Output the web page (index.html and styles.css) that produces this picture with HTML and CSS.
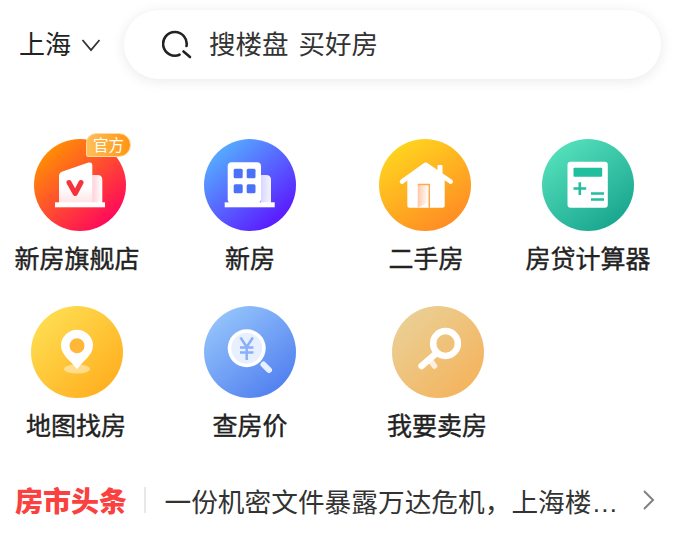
FILE: index.html
```html
<!DOCTYPE html>
<html lang="zh-CN">
<head>
    <meta charset="UTF-8">
    <meta name="viewport" content="width=device-width, initial-scale=1.0">
    <title>房产</title>
    <link rel="stylesheet" href="styles.css">
</head>
<body>

    <!-- 顶部：城市 + 搜索 -->
    <div class="topbar">
        <div class="city">
            <span class="city-name">上海</span>
            <svg class="city-arrow" width="20" height="14" viewBox="0 0 20 14"><path d="M1.500 2l8.500 10 8.500-10" fill="none" stroke="#333" stroke-width="1.800"/></svg>
        </div>
        <div class="search">
            <svg class="search-icon" width="30" height="30" viewBox="0 0 30 30"><path d="M24.500 16A11.800 11.800 0 1 0 17.500 24.700" fill="none" stroke="#222" stroke-width="2.600" stroke-linecap="round"/><path d="M21.500 21.500l6.500 5.500" fill="none" stroke="#222" stroke-width="2.600" stroke-linecap="round"/></svg>
            <span class="search-text">搜楼盘 买好房</span>
        </div>
    </div>

    <!-- 入口 第一排 -->
    <div class="row row-one">
        <a class="tile w160">
            <div class="tile-icon">
                <svg width="92" height="92" viewBox="0 0 92 92">
                    <defs>
                        <linearGradient id="g1" x1="0.1" y1="0.1" x2="0.8" y2="0.9"><stop offset="0" stop-color="#ff9500"/><stop offset="1" stop-color="#ff0a5a"/></linearGradient>
                        <linearGradient id="g1w" x1="0" y1="0" x2="1" y2="0"><stop offset="0" stop-color="#ffd0d6"/><stop offset="1" stop-color="#fff"/></linearGradient>
                        <linearGradient id="g1b" x1="0" y1="0" x2="0" y2="1"><stop offset="0.6" stop-color="#fff"/><stop offset="1" stop-color="#ffe4e6"/></linearGradient>
                    </defs>
                    <circle cx="46" cy="46" r="46" fill="url(#g1)"/>
                    <path d="M58 36h5.500q4.800 0 4.800 5v23H58z" fill="url(#g1w)"/>
                    <path d="M25 37q0-3.500 3.500-4.600l26-8.800q3.800-1 3.800 3V64H25z" fill="url(#g1b)"/>
                    <rect x="21" y="63.300" width="50" height="5" fill="#fff"/>
                    <path d="M35 43.500l6.200 11 5.800-11" fill="none" stroke="#f6323c" stroke-width="5" stroke-linecap="round" stroke-linejoin="round"/>
                </svg>
                <span class="badge">官方</span>
            </div>
            <span class="tile-name shift-l3">新房旗舰店</span>
        </a>
        <a class="tile w180">
            <div class="tile-icon">
                <svg width="92" height="92" viewBox="0 0 92 92">
                    <defs>
                        <linearGradient id="g2" x1="0.15" y1="0.1" x2="0.8" y2="0.85"><stop offset="0" stop-color="#55aeff"/><stop offset="1" stop-color="#5a20ff"/></linearGradient>
                        <linearGradient id="g2w" x1="0" y1="0" x2="1" y2="0"><stop offset="0" stop-color="#d8d6ff"/><stop offset="1" stop-color="#f4f4ff"/></linearGradient>
                    </defs>
                    <circle cx="46" cy="46" r="46" fill="url(#g2)"/>
                    <path d="M57 36h5q5 0 5 5v23H57z" fill="url(#g2w)"/>
                    <rect x="23.700" y="23.300" width="33.300" height="41" rx="4" fill="#fff"/>
                    <rect x="20.700" y="63.300" width="50" height="5" fill="#fff"/>
                    <rect x="29.700" y="29.700" width="9" height="9.600" rx="1.500" fill="#4a72f8"/>
                    <rect x="42.700" y="29.700" width="8.800" height="9.600" rx="1.500" fill="#4a72f8"/>
                    <rect x="29.700" y="45.300" width="9" height="9" rx="1.500" fill="#4a72f8"/>
                    <rect x="42.700" y="45.300" width="8.800" height="9" rx="1.500" fill="#4a72f8"/>
                </svg>
            </div>
            <span class="tile-name">新房</span>
        </a>
        <a class="tile w170">
            <div class="tile-icon">
                <svg width="92" height="92" viewBox="0 0 92 92">
                    <defs>
                        <linearGradient id="g3" x1="0.2" y1="0.05" x2="0.75" y2="0.9"><stop offset="0" stop-color="#ffd51e"/><stop offset="1" stop-color="#ff8f24"/></linearGradient>
                        <linearGradient id="g3d" x1="0" y1="0" x2="1" y2="0"><stop offset="0" stop-color="#ffc9a6"/><stop offset="1" stop-color="#fff"/></linearGradient>
                    </defs>
                    <circle cx="46" cy="46" r="46" fill="url(#g3)"/>
                    <rect x="58.500" y="26" width="5" height="14" rx="1" fill="#fff"/>
                    <path d="M28.300 41L46.700 27 65.700 41v25.700q0 2-2 2H30.300q-2 0-2-2z" fill="#fff"/>
                    <path d="M23 42.700L46.700 25.700 71.700 42.700" fill="none" stroke="#fff" stroke-width="4.500" stroke-linecap="round" stroke-linejoin="round"/>
                    <path d="M38.700 46l10.800 0.500V63l-10.800 5.700z" fill="url(#g3d)"/>
                    <path d="M38.700 45.500h11.600v23.200" fill="none" stroke="#ffa94d" stroke-width="1.500"/>
                </svg>
            </div>
            <span class="tile-name shift-r1">二手房</span>
        </a>
        <a class="tile w156">
            <div class="tile-icon">
                <svg width="92" height="92" viewBox="0 0 92 92">
                    <defs>
                        <linearGradient id="g4" x1="0.15" y1="0.05" x2="0.8" y2="0.95"><stop offset="0" stop-color="#56e2bc"/><stop offset="1" stop-color="#18a58e"/></linearGradient>
                    </defs>
                    <circle cx="46" cy="46" r="46" fill="url(#g4)"/>
                    <rect x="25.500" y="22.700" width="40.300" height="46" rx="3" fill="#fff"/>
                    <rect x="31.500" y="28.700" width="28.700" height="9" rx="1" fill="#22bf9e"/>
                    <path d="M31.500 49.500h12.700M37.800 43.200v12.700M49 54.500h13M49 60.500h13" fill="none" stroke="#22bf9e" stroke-width="2.600"/>
                </svg>
            </div>
            <span class="tile-name">房贷计算器</span>
        </a>
    </div>

    <!-- 入口 第二排 -->
    <div class="row row-two">
        <a class="tile w154">
            <div class="tile-icon">
                <svg width="92" height="92" viewBox="0 0 92 92">
                    <defs>
                        <linearGradient id="g5" x1="0.1" y1="0.1" x2="0.85" y2="0.9"><stop offset="0" stop-color="#ffde52"/><stop offset="1" stop-color="#ffb020"/></linearGradient>
                    </defs>
                    <circle cx="46" cy="46" r="46" fill="url(#g5)"/>
                    <ellipse cx="46" cy="63" rx="13" ry="4.500" fill="#fff" opacity="0.45"/>
                    <path d="M46 63C40 55 30 49 30 39.700a16 16 0 0 1 32 0C62 49 52 55 46 63z" fill="#fff"/>
                    <circle cx="46" cy="39.700" r="7.500" fill="#ffb73a"/>
                </svg>
            </div>
            <span class="tile-name shift-l1">地图找房</span>
        </a>
        <a class="tile w192">
            <div class="tile-icon">
                <svg width="92" height="92" viewBox="0 0 92 92">
                    <defs>
                        <linearGradient id="g6" x1="0.15" y1="0.1" x2="0.8" y2="0.9"><stop offset="0" stop-color="#94c3fb"/><stop offset="1" stop-color="#5382f0"/></linearGradient>
                    </defs>
                    <circle cx="46" cy="46" r="46" fill="url(#g6)"/>
                    <path d="M59.500 58.500l5.500 5.500" fill="none" stroke="#e8f0ff" stroke-width="6" stroke-linecap="round"/>
                    <circle cx="42.700" cy="42.300" r="19" fill="#fff"/>
                    <circle cx="42.700" cy="42.300" r="15.500" fill="#e8f0ff"/>
                    <path d="M36.500 31.500l6.200 9.500 6.200-9.500M36 41.500h13.400M36 46.500h13.400M42.700 41v13" fill="none" stroke="#8aaffa" stroke-width="2.500"/>
                </svg>
            </div>
            <span class="tile-name">查房价</span>
        </a>
        <a class="tile w184">
            <div class="tile-icon">
                <svg width="92" height="92" viewBox="0 0 92 92">
                    <defs>
                        <linearGradient id="g7" x1="0.1" y1="0.1" x2="0.85" y2="0.9"><stop offset="0" stop-color="#ead096"/><stop offset="1" stop-color="#f4b45e"/></linearGradient>
                    </defs>
                    <circle cx="46" cy="46" r="46" fill="url(#g7)"/>
                    <path d="M38 54l4.500 6" fill="none" stroke="#fdeede" stroke-width="5.500" stroke-linecap="round"/>
                    <path d="M44 47.500L29.500 60" fill="none" stroke="#fff" stroke-width="6.500" stroke-linecap="round"/>
                    <circle cx="53.500" cy="37.500" r="12.400" fill="none" stroke="#fff" stroke-width="6.500"/>
                </svg>
            </div>
            <span class="tile-name shift-l1">我要卖房</span>
        </a>
    </div>

    <!-- 房市头条 -->
    <div class="news">
        <span class="news-logo">房市头条</span>
        <span class="news-line"></span>
        <span class="news-text">一份机密文件暴露万达危机，上海楼…</span>
        <svg class="news-arrow" width="14" height="22" viewBox="0 0 14 22"><path d="M2 2l9 9-9 9" fill="none" stroke="#808080" stroke-width="2"/></svg>
    </div>

</body>
</html>
```

FILE: styles.css
```css
* {
    box-sizing: border-box;
}
body {
    margin: 0;
    background-color: #fff;
    color: #222;
    font-family: "Noto Sans CJK SC", "Liberation Sans", sans-serif;
}
.topbar {
    display: flex;
    align-items: center;
    height: 69px;
    margin-top: 10px;
    padding: 0 20px 0 19px;
}
.city {
    display: flex;
    align-items: center;
    width: 105px;
    flex-shrink: 0;
    font-size: 26px;
    color: #222;
}
.city-name {
    margin-bottom: 4px;
}
.city-arrow {
    margin-left: 10px;
}
.search {
    display: flex;
    align-items: center;
    width: 537px;
    height: 69px;
    padding-left: 38px;
    border-radius: 35px;
    background-color: #fff;
    box-shadow: 0 2px 14px rgba(0,0,0,0.09);
    font-size: 26.500px;
    color: #333;
}
.search-icon {
    margin-right: 17px;
}
.search-text {
    margin-bottom: 4px;
    word-spacing: 4px;
}
.row {
    display: flex;
}
.row-one {
    margin-top: 60px;
}
.row-two {
    margin-top: 31px;
}
.tile {
    display: flex;
    flex-direction: column;
    align-items: center;
    color: #222;
}
.w154 { width: 154px; }
.w156 { width: 156px; }
.w160 { width: 160px; }
.w170 { width: 170px; }
.w180 { width: 180px; }
.w184 { width: 184px; }
.w192 { width: 192px; }
.tile-icon {
    position: relative;
    width: 92px;
    height: 92px;
}
.tile-icon svg {
    display: block;
}
.badge {
    position: absolute;
    left: 52px;
    top: -6px;
    width: 45px;
    height: 24px;
    border-radius: 10px 12px 12px 2px;
    border: 1px solid #ffd9a0;
    background: linear-gradient(90deg, #ffc058, #ff9512);
    color: #fff;
    font-size: 15.500px;
    line-height: 21px;
    text-align: center;
}
.tile-name {
    margin-top: 8px;
    font-size: 25px;
    line-height: 36px;
    white-space: nowrap;
    -webkit-text-stroke: 0.4px #222;
}
.shift-l3 { margin-left: -6px; }
.shift-l1 { margin-left: -2px; }
.shift-r1 { margin-left: 2px; }
.news {
    display: flex;
    align-items: center;
    height: 36px;
    margin-top: 40px;
    padding-left: 15px;
}
.news-logo {
    width: 112px;
    flex-shrink: 0;
    color: #fb4040;
    font-size: 28px;
    font-weight: 900;
    white-space: nowrap;
}
.news-line {
    width: 1.500px;
    height: 26px;
    margin: 0 19px 0 17px;
    background-color: #e8e8e8;
}
.news-text {
    width: 452px;
    font-family: "Liberation Sans", "Noto Sans CJK SC", sans-serif;
    font-size: 26.700px;
    color: #333;
    white-space: nowrap;
}
.news-arrow {
    margin-left: 25px;
}
```
